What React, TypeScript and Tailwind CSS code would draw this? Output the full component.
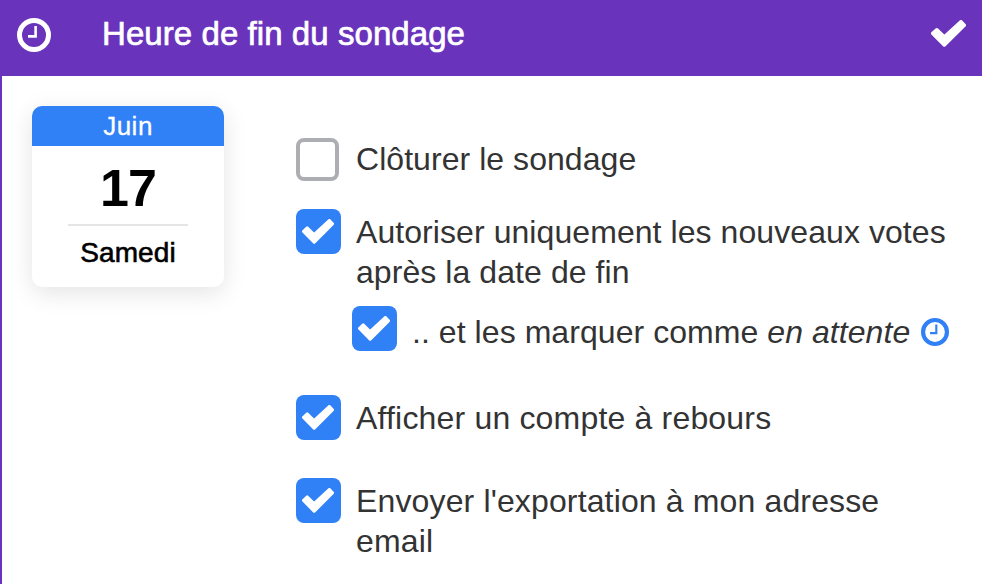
import clsx from 'clsx';
import type { ReactNode } from 'react';

interface IconProps {
  className?: string;
}

interface OptionProps {
  checked?: boolean;
  className?: string;
  labelClassName?: string;
  children: ReactNode;
}

function ClockIcon({ className }: IconProps) {
  return (
    <svg className={className} viewBox="0 0 34 34" fill="none" stroke="currentColor">
      <circle cx="17" cy="17" r="14.5" strokeWidth="5" />
      <path d="M18.6 8v10.4H11" strokeWidth="2.6" />
    </svg>
  );
}

function CheckIcon({ className }: IconProps) {
  return (
    <svg
      className={className}
      viewBox="0 0 35 27"
      preserveAspectRatio="none"
      fill="currentColor"
      stroke="currentColor"
      strokeWidth="3.6"
      strokeLinejoin="round"
    >
      <path d="M1.8 13.4L5.8 9.8L13.3 17.1L29.9 1.8L33.2 5.2L13.3 24.9Z" />
    </svg>
  );
}

function Option({ checked = false, className, labelClassName, children }: OptionProps) {
  return (
    <label className={clsx('flex items-start', className)}>
      <span
        className={clsx(
          'flex shrink-0 rounded-[8px]',
          checked
            ? 'h-[45px] w-[45px] bg-[#3080f6] pt-[10px] pl-[6px] text-white'
            : 'mr-[2px] h-[43px] w-[43px] border-4 border-[#adaeb1]'
        )}
      >
        {checked && <CheckIcon className="h-[25px] w-8" />}
      </span>
      <span className={clsx('text-[32px] leading-10 whitespace-nowrap text-[#333]', labelClassName)}>
        {children}
      </span>
    </label>
  );
}

function DateCard() {
  return (
    <div className="h-[181px] w-48 shrink-0 overflow-hidden rounded-[10px] bg-white text-center text-black shadow-[0_6px_24px_rgba(0,0,0,0.11)]">
      <div className="h-10 bg-[#3080f6] text-[26px] leading-10 tracking-[0.5px] text-white [-webkit-text-stroke:0.3px]">
        Juin
      </div>
      <div className="mx-9 h-20 border-b-2 border-[#e5e5e5] text-[52px] leading-[84px] font-bold tracking-[-1px]">
        17
      </div>
      <div className="pt-[7px] text-[28px] leading-10 tracking-[0.1px] [-webkit-text-stroke:0.6px]">Samedi</div>
    </div>
  );
}

export default function App() {
  return (
    <div className="h-[584px] w-[982px] overflow-hidden border-l-2 border-[#6933bc] bg-white font-['Liberation_Sans',Arial,sans-serif]">
      <header className="flex h-19 items-start bg-[#6933bc] pr-4 pl-[15px] text-white">
        <ClockIcon className="mt-[18px] h-[34px] w-[34px]" />
        <h1 className="mt-[14px] ml-[51px] text-[33px] leading-10 tracking-[0.07px] [-webkit-text-stroke:0.7px]">
          Heure de fin du sondage
        </h1>
        <CheckIcon className="mt-5 ml-auto h-[27px] w-[35px]" />
      </header>

      <main className="flex pt-[30px] pl-[30px]">
        <DateCard />
        <div className="ml-[72px] pt-8">
          <Option labelClassName="ml-[15px] mt-px tracking-[0.05px]">Clôturer le sondage</Option>
          <Option checked className="mt-[28px]" labelClassName="ml-[15px] mt-[3px] tracking-[0.07px]">
            Autoriser uniquement les nouveaux votes
            <br />
            après la date de fin
          </Option>
          <Option
            checked
            className="mt-[14px] ml-14"
            labelClassName="ml-[15px] mt-[6px] flex items-center tracking-[0.06px]"
          >
            <span>
              .. et les marquer comme <em>en attente</em>
            </span>
            <ClockIcon className="ml-[11px] h-7 w-7 text-[#3080f6]" />
          </Option>
          <Option checked className="mt-[43px]" labelClassName="ml-[15px] mt-[3px] tracking-[0.18px]">
            Afficher un compte à rebours
          </Option>
          <Option checked className="mt-[38px]" labelClassName="ml-[15px] mt-[3px] tracking-[0.14px]">
            Envoyer l'exportation à mon adresse
            <br />
            email
          </Option>
        </div>
      </main>
    </div>
  );
}
